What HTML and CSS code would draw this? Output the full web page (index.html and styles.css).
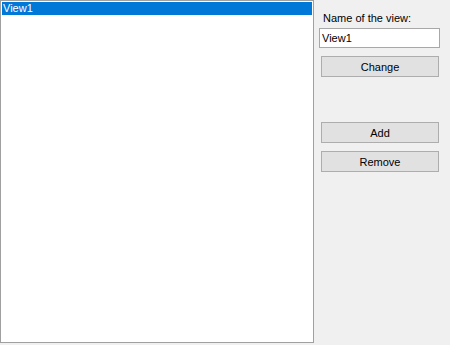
FILE: index.html
```html
<!DOCTYPE html>
<html>
<head>
<meta charset="utf-8">
<link rel="stylesheet" href="styles.css">
</head>
<body>
<div class="window">
  <div class="listbox">
    <div class="item selected">View1</div>
  </div>
  <div class="panel">
    <div class="label">Name of the view:</div>
    <input class="textbox" type="text" value="View1">
    <button class="btn btn-change">Change</button>
    <button class="btn btn-add">Add</button>
    <button class="btn btn-remove">Remove</button>
  </div>
</div>
</body>
</html>
```
FILE: styles.css
```css
html, body {
  margin: 0;
  padding: 0;
  background: #f0f0f0;
  width: 450px;
  height: 345px;
  overflow: hidden;
  font-family: "Liberation Sans", Arial, sans-serif;
  font-size: 11px;
}
.window {
  display: flex;
  align-items: flex-start;
}
.listbox {
  box-sizing: border-box;
  width: 314px;
  height: 343px;
  background: #fff;
  border: 1px solid #a0a0a0;
  padding: 1px;
}
.item {
  height: 13px;
  line-height: 13px;
  padding-left: 1px;
  color: #000;
}
.item.selected {
  background: #0078d7;
  color: #fff;
}
.panel {
  display: flex;
  flex-direction: column;
  padding-left: 5px;
  padding-top: 12px;
}
.label {
  margin-left: 4px;
  height: 13px;
  line-height: 13px;
  color: #000;
}
.textbox {
  box-sizing: border-box;
  margin: 3px 0 0 0;
  width: 121px;
  height: 20px;
  border: 1px solid #a8a8a8;
  background: #fff;
  font-family: inherit;
  font-size: 11px;
  padding: 0 2px;
  outline: none;
  color: #000;
}
.btn {
  box-sizing: border-box;
  width: 118px;
  height: 21px;
  margin-left: 2px;
  border: 1px solid #adadad;
  background: #e1e1e1;
  font-family: inherit;
  font-size: 11px;
  color: #000;
  padding: 0;
}
.btn-change { margin-top: 8px; }
.btn-add { margin-top: 45px; }
.btn-remove { margin-top: 8px; }
```
